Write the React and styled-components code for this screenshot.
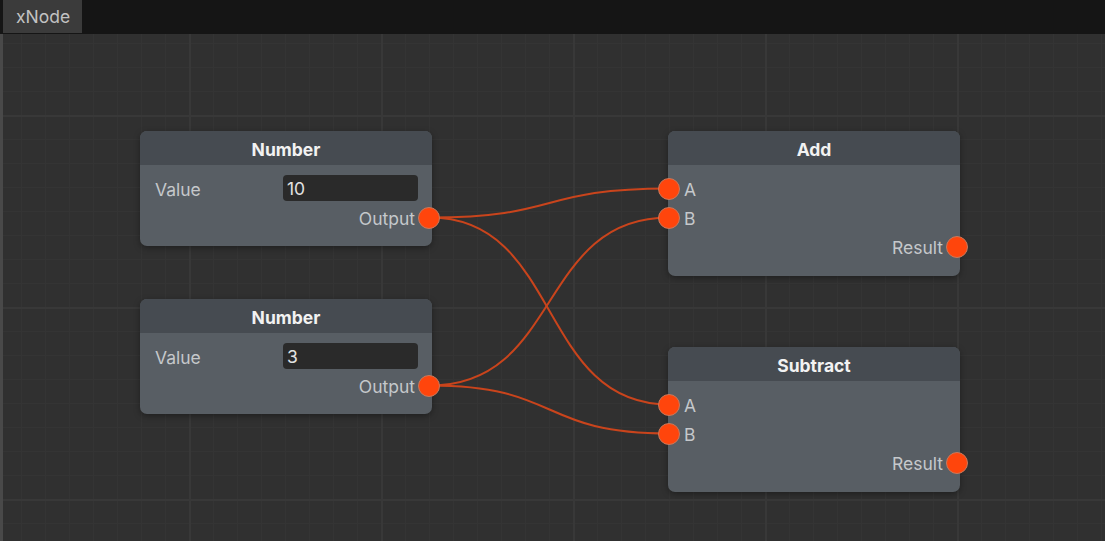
import React from "react";
import styled, { createGlobalStyle } from "styled-components";

const GlobalStyle = createGlobalStyle`
	html, body {
		margin: 0;
		padding: 0;
		background: #141414;
		overflow: hidden;
	}
	* {
		box-sizing: border-box;
	}
`;

const Window = styled.div`
	width: 1105px;
	height: 541px;
	display: flex;
	flex-direction: column;
	font-family: Inter, "Noto Sans", sans-serif;
`;

const TopBar = styled.div`
	height: 34px;
	flex: none;
	display: flex;
	align-items: stretch;
	padding-left: 3px;
	background: #151515;
`;

const Tab = styled.div`
	width: 79px;
	height: 33px;
	display: flex;
	align-items: center;
	padding-left: 13px;
	background: #3b3b3b;
	color: #c2c2c2;
	font-size: 17.5px;
`;

const Canvas = styled.div`
	position: relative;
	flex: 1;
	border-left: 3px solid #494949;
	background-color: #303030;
	background-image: linear-gradient(to right, #383838 2px, transparent 2px),
		linear-gradient(to bottom, #383838 2px, transparent 2px),
		linear-gradient(to right, #343434 1px, transparent 1px),
		linear-gradient(to bottom, #343434 1px, transparent 1px);
	background-size: 192px 192px, 192px 192px, 24px 24px, 24px 24px;
	background-position: 186px 0, 0 81px, 18px 0, 0 9px;
	overflow: hidden;
`;

const EdgeMark = styled.div`
	position: absolute;
	left: -3px;
	top: 423px;
	width: 3px;
	height: 39px;
	background: #161616;
`;

const Wires = styled.svg`
	position: absolute;
	left: 0;
	top: 0;
	width: 100%;
	height: 100%;
	pointer-events: none;
`;

const NodeBox = styled.div`
	position: absolute;
	width: 292px;
	border-radius: 7px;
	background: #585e64;
	box-shadow: 0 2px 6px rgba(0, 0, 0, 0.35);
	padding-bottom: ${(p) => p.$pad}px;
`;

const Header = styled.div`
	height: 34px;
	display: flex;
	align-items: center;
	justify-content: center;
	padding-top: 3px;
	background: #464b51;
	border-radius: 7px 7px 0 0;
	color: #f2f2f2;
	font-size: 17.5px;
	font-weight: 700;
`;

const Body = styled.div`
	padding-top: 9px;
	display: flex;
	flex-direction: column;
`;

const Row = styled.div`
	position: relative;
	height: 29px;
	display: flex;
	align-items: center;
	justify-content: ${(p) => (p.$side === "out" ? "flex-end" : "space-between")};
	padding: 1px ${(p) => (p.$side === "out" ? 17 : 14)}px 0 ${(p) => (p.$side === "in" ? 16 : 15)}px;
	color: #c5c8cb;
	font-size: 17.5px;
`;

const Field = styled.div`
	width: 135px;
	height: 26px;
	margin-top: -2px;
	display: flex;
	align-items: center;
	padding-left: 4px;
	border-radius: 4px;
	background: #2a2a2a;
	color: #e2e2e2;
	font-size: 17.5px;
`;

const Port = styled.span`
	position: absolute;
	top: 50%;
	${(p) => (p.$side === "in" ? "left: -10px;" : "right: -8px;")}
	width: 22px;
	height: 22px;
	margin-top: -11px;
	border-radius: 50%;
	background: #ff450c;
	border: 1.5px solid #c8795c;
`;

const nodes = [
	{
		id: "n1",
		title: "Number",
		x: 137,
		y: 97,
		pad: 14,
		rows: [
			{ kind: "field", label: "Value", value: "10" },
			{ kind: "out", label: "Output" },
		],
	},
	{
		id: "n2",
		title: "Number",
		x: 137,
		y: 265,
		pad: 14,
		rows: [
			{ kind: "field", label: "Value", value: "3" },
			{ kind: "out", label: "Output" },
		],
	},
	{
		id: "add",
		title: "Add",
		x: 665,
		y: 97,
		pad: 15,
		rows: [
			{ kind: "in", label: "A" },
			{ kind: "in", label: "B" },
			{ kind: "out", label: "Result" },
		],
	},
	{
		id: "sub",
		title: "Subtract",
		x: 665,
		y: 313,
		pad: 15,
		rows: [
			{ kind: "in", label: "A" },
			{ kind: "in", label: "B" },
			{ kind: "out", label: "Result" },
		],
	},
];

const links = [
	["n1", 1, "add", 0],
	["n1", 1, "sub", 0],
	["n2", 1, "add", 1],
	["n2", 1, "sub", 1],
];

function portPos(id, row, side) {
	const n = nodes.find((item) => item.id === id);
	const y = n.y + 34 + 9 + row * 29 + 14.5;
	const x = side === "out" ? n.x + 292 - 2 : n.x + 1;
	return [x, y];
}

function Node({ node }) {
	return (
		<NodeBox style={{ left: node.x, top: node.y }} $pad={node.pad}>
			<Header>{node.title}</Header>
			<Body>
				{node.rows.map((row, i) => (
					<Row key={i} $side={row.kind}>
						{row.kind === "in" && <Port $side="in" />}
						<span>{row.label}</span>
						{row.kind === "field" && <Field>{row.value}</Field>}
						{row.kind === "out" && <Port $side="out" />}
					</Row>
				))}
			</Body>
		</NodeBox>
	);
}

export default function App() {
	return (
		<Window>
			<GlobalStyle />
			<TopBar>
				<Tab>xNode</Tab>
			</TopBar>
			<Canvas>
				<EdgeMark />
				<Wires>
					{links.map(([a, ar, b, br], i) => {
						const [x1, y1] = portPos(a, ar, "out");
						const [x2, y2] = portPos(b, br, "in");
						const d = (x2 - x1) * 0.55;
						return (
							<path
								key={i}
								d={`M${x1} ${y1} C${x1 + d} ${y1} ${x2 - d} ${y2} ${x2} ${y2}`}
								fill="none"
								stroke="#c9441c"
								strokeWidth="2"
							/>
						);
					})}
				</Wires>
				{nodes.map((node) => (
					<Node key={node.id} node={node} />
				))}
			</Canvas>
		</Window>
	);
}
